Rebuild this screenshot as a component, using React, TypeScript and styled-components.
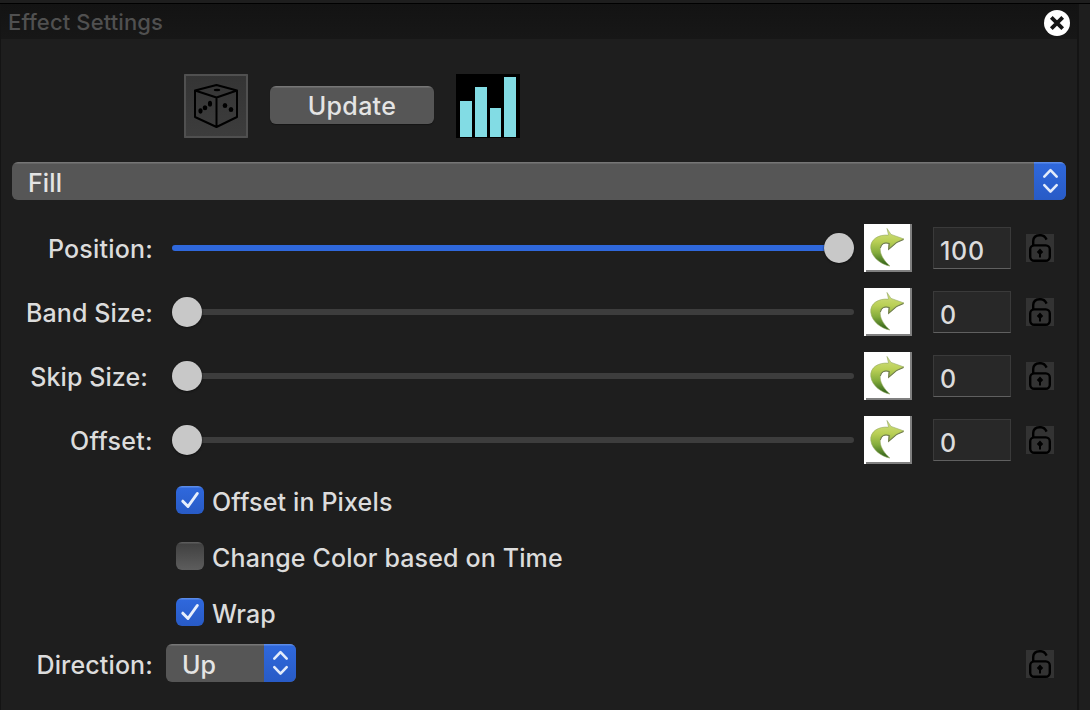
import React from "react";
import styled, { createGlobalStyle } from "styled-components";

const Global = createGlobalStyle`
  *, *::before, *::after { box-sizing: border-box; }
  body {
    margin: 0;
    background: #1e1e1e;
    font-family: Inter, "Liberation Sans", sans-serif;
    font-size: 25px;
    font-weight: 450;
    line-height: 32px;
    color: #dcdcdc;
    overflow: hidden;
  }
  svg { display: block; }
`;

const Page = styled.div`
  width: 1090px;
  height: 710px;
  padding-top: 3px;
  display: flex;
  flex-direction: column;
`;

const Panel = styled.section`
  width: 1079px;
  flex: 1;
  border-left: 1px solid #141414;
  border-right: 2px solid #141414;
`;

const TopLine = styled.div`
  height: 1px;
  background: #000;
`;

const Header = styled.header`
  height: 35px;
  padding: 0 6px 0 7px;
  display: flex;
  align-items: center;
  justify-content: space-between;
  background: linear-gradient(#131313, #171717);
`;

const Title = styled.h1`
  margin: 0;
  font-size: 22px;
  font-weight: 550;
  letter-spacing: 0.12px;
  color: #505050;
`;

const Close = styled.button`
  width: 28px;
  height: 28px;
  padding: 0;
  border: 0;
  background: none;
`;

const Tools = styled.div`
  display: flex;
  align-items: center;
  gap: 22px;
  height: 64px;
  margin: 35px 0 24px 183px;
`;

const Tile = styled.div<{ $dark?: boolean }>`
  width: 64px;
  height: 64px;
  background: ${(p) => (p.$dark ? "#000" : "linear-gradient(#343434, #3d3d3d)")};
`;

const PushButton = styled.button`
  width: 164px;
  height: 38px;
  margin-bottom: 2px;
  padding: 1px 0 0;
  border: 0;
  border-radius: 6px;
  background: linear-gradient(#767676 0 1px, #565656 2px);
  box-shadow: 0 1px 1px #141414;
  font: inherit;
  letter-spacing: 0.3px;
  color: #e4e4e4;
`;

const Select = styled.div<{ $width: number }>`
  width: ${(p) => p.$width}px;
  height: 38px;
  display: flex;
  justify-content: space-between;
  border-radius: 6px;
  overflow: hidden;
  background: linear-gradient(#767676 0 1px, #565656 2px);
  color: #e4e4e4;
`;

const SelectText = styled.span`
  padding: 5px 0 0 16px;
  letter-spacing: 0.1px;
`;

const Stepper = styled.span`
  width: 32px;
  height: 38px;
  background: linear-gradient(#5a8be9 0 1px, #2f68dc 2px, #285bc6);
`;

const EffectRow = styled.div`
  padding-left: 11px;
`;

const Rows = styled.div`
  margin-top: 16px;
`;

const Row = styled.div`
  display: flex;
  align-items: center;
  height: 64px;
`;

const Label = styled.label<{ $spacing: number; $inset?: number; $drop?: number }>`
  width: 152px;
  padding: ${(p) => p.$drop ?? 1}px ${(p) => p.$inset ?? 0}px 0 0;
  text-align: right;
  white-space: nowrap;
  letter-spacing: ${(p) => p.$spacing}px;
`;

const Track = styled.div<{ $full: boolean }>`
  width: 682px;
  height: 6px;
  margin-left: 19px;
  display: flex;
  align-items: center;
  justify-content: ${(p) => (p.$full ? "flex-end" : "flex-start")};
  border-radius: 3px;
  background: ${(p) => (p.$full ? "#2f68dc" : "#3d3d3d")};
`;

const Thumb = styled.span`
  width: 30px;
  height: 30px;
  flex: none;
  border-radius: 50%;
  background: #c8c8c8;
  box-shadow: 0 1px 2px #111;
`;

const ResetButton = styled.button`
  width: 48px;
  height: 48px;
  margin-left: 10px;
  padding: 0;
  border: 0;
  background: #fff;
`;

const Value = styled.div`
  width: 78px;
  height: 42px;
  margin-left: 21px;
  padding: 7px 0 0 6px;
  border: 1px solid #3a3a3a;
  border-bottom-color: #606060;
  background: #282828;
  letter-spacing: 0.7px;
`;

const LockButton = styled.button<{ $left: number; $drop?: number }>`
  width: 28px;
  height: 28px;
  margin: ${(p) => p.$drop ?? 0}px 0 0 ${(p) => p.$left}px;
  padding: 0;
  border: 0;
  background: #333;
`;

const Checks = styled.div`
  display: flex;
  flex-direction: column;
  gap: 28px;
  padding: 14px 0 18px 175px;
`;

const CheckRow = styled.label<{ $spacing: number }>`
  display: flex;
  align-items: center;
  gap: 8px;
  height: 28px;
  letter-spacing: ${(p) => p.$spacing}px;
`;

const CheckText = styled.span`
  padding-top: 4px;
`;

const Box = styled.span<{ $on: boolean }>`
  width: 28px;
  height: 28px;
  border-radius: 6px;
  background: ${(p) =>
    p.$on
      ? "linear-gradient(#5a8be9 0 1px, #2f68dc 2px, #285bc6)"
      : "linear-gradient(#5c5c5c 0 1px, #414141 2px, #5d5d5d)"};
`;

const DirectionRow = styled.div`
  display: flex;
  align-items: center;
  height: 38px;
`;

const DirectionSelect = styled.div`
  margin-left: 13px;
`;

const Arrows = () => (
  <Stepper>
    <svg width="32" height="38" fill="none" stroke="#e3ebfa" strokeWidth="2.6" strokeLinecap="round" strokeLinejoin="round">
      <path d="M10.3 14.6L16.5 8.2L22.7 14.6M10.3 23.2L16.5 29.6L22.7 23.2" />
    </svg>
  </Stepper>
);

const Lock = ({ left, drop }: { left: number; drop?: number }) => (
  <LockButton $left={left} $drop={drop}>
    <svg width="28" height="28" fill="none" stroke="#000" strokeWidth="2.4">
      <rect x="4.2" y="11.4" width="19.6" height="15.4" rx="4" />
      <path d="M7.2 11V7Q7.6 1.3 13.5 1.3H15Q18.6 1.5 20.6 5.6" />
      <path d="M14 14.5L17.2 18L15 20.2V23.5H13V20.2L10.8 18Z" fill="#000" stroke="none" />
    </svg>
  </LockButton>
);

const Reset = () => (
  <ResetButton>
    <svg width="48" height="48">
      <defs>
        <linearGradient id="leaf" x1="0" y1="0" x2="0" y2="1">
          <stop offset="0" stopColor="#d3e081" />
          <stop offset=".35" stopColor="#b9cf55" />
          <stop offset=".65" stopColor="#84ac3c" />
          <stop offset="1" stopColor="#2a5c18" />
        </linearGradient>
      </defs>
      <path d="M46 0H48V48H2V46H46Z" fill="#808080" />
      <path
        d="M23 4.5L27 10.4L40 15L32.5 18.4L24.5 25.5L25 19.4C19.5 17.6 16 20.8 16.2 26C16.5 31.5 20.8 37.5 25.8 42C17.5 40.5 8 34 6.8 24.5C5.8 15.5 14.5 10.2 24.6 11.2Z"
        fill="url(#leaf)"
        stroke="#93a860"
        strokeWidth=".6"
      />
      <path d="M39.5 15.4L32.5 18.6L24.7 25.3L25.2 19.6C20.5 18 17.2 19.8 16.4 24" fill="none" stroke="#6e7a4a" strokeWidth="1.1" />
    </svg>
  </ResetButton>
);

const sliders = [
  { label: "Position:", value: 100, spacing: 0.2, inset: 0 },
  { label: "Band Size:", value: 0, spacing: 0.1, inset: 0 },
  { label: "Skip Size:", value: 0, spacing: 0.1, inset: 5 },
  { label: "Offset:", value: 0, spacing: 0.3, inset: 0 },
];

const checks = [
  { label: "Offset in Pixels", on: true, spacing: 0.15 },
  { label: "Change Color based on Time", on: false, spacing: 0.14 },
  { label: "Wrap", on: true, spacing: 0.1 },
];

export default function App() {
  return (
    <Page>
      <Global />
      <TopLine />
      <Panel>
        <Header>
          <Title>Effect Settings</Title>
          <Close aria-label="Close">
            <svg width="28" height="28">
              <circle cx="14" cy="15" r="13" fill="#fff" />
              <path d="M8.3 9.3L19.7 20.7M19.7 9.3L8.3 20.7" stroke="#161616" strokeWidth="3.8" />
            </svg>
          </Close>
        </Header>
        <Tools>
          <Tile>
            <svg width="64" height="64" fill="none" stroke="#000" strokeWidth="2" strokeLinejoin="round">
              <rect x="1" y="1" width="62" height="62" stroke="#505050" />
              <path d="M32.5 11L53 16.5V43L32.5 53L11 43V16.5ZM11 16.5L32.5 23.5L53 16.5M32.5 23.5V53" />
              <g fill="#000" stroke="none">
                <ellipse cx="33" cy="16" rx="3.2" ry="1.2" />
                <ellipse cx="26" cy="29.7" rx="2.1" ry="2.9" />
                <ellipse cx="21" cy="33.7" rx="2.3" ry="2.5" />
                <ellipse cx="16.5" cy="37" rx="2.1" ry="2.7" />
                <ellipse cx="41" cy="31.4" rx="2.3" ry="2.5" />
                <ellipse cx="47" cy="35.4" rx="2.3" ry="2.5" />
              </g>
            </svg>
          </Tile>
          <PushButton>Update</PushButton>
          <Tile $dark>
            <svg width="64" height="64" fill="#82dce4">
              <path d="M4 27H16V63H4ZM19 13H31V63H19ZM34 34H45V63H34ZM48 3H60V63H48Z" />
            </svg>
          </Tile>
        </Tools>
        <EffectRow>
          <Select $width={1054}>
            <SelectText>Fill</SelectText>
            <Arrows />
          </Select>
        </EffectRow>
        <Rows>
          {sliders.map((s) => (
            <Row key={s.label}>
              <Label $spacing={s.spacing} $inset={s.inset}>{s.label}</Label>
              <Track $full={s.value === 100}>
                <Thumb />
              </Track>
              <Reset />
              <Value>{s.value}</Value>
              <Lock left={15} />
            </Row>
          ))}
        </Rows>
        <Checks>
          {checks.map((c) => (
            <CheckRow key={c.label} $spacing={c.spacing}>
              <Box $on={c.on}>
                {c.on && (
                  <svg width="28" height="28" fill="none" stroke="#e8effc" strokeWidth="3" strokeLinecap="round" strokeLinejoin="round">
                    <path d="M6.8 15.2L12 20.5L21.3 7.5" />
                  </svg>
                )}
              </Box>
              <CheckText>{c.label}</CheckText>
            </CheckRow>
          ))}
        </Checks>
        <DirectionRow>
          <Label $spacing={0.13} $drop={3}>Direction:</Label>
          <DirectionSelect>
            <Select $width={130}>
              <SelectText>Up</SelectText>
              <Arrows />
            </Select>
          </DirectionSelect>
          <Lock left={730} drop={2} />
        </DirectionRow>
      </Panel>
    </Page>
  );
}
